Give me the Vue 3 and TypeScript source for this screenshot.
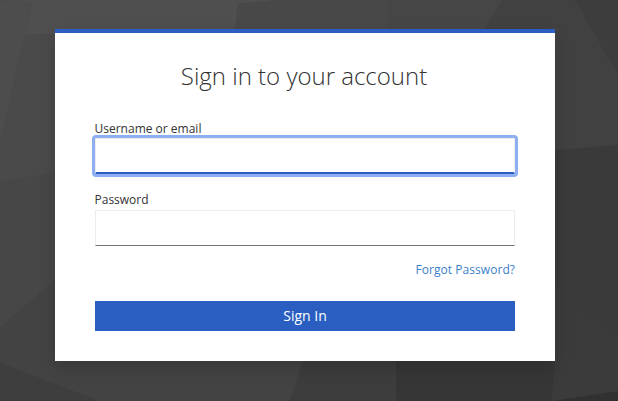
<script setup lang="ts">
const facets: { points: string; fill: string }[] = [
  { points: "0,0 618,0 618,401 0,401", fill: "#424242" },
  { points: "0,0 277,0 238,4 235,34 25,34 32,3", fill: "#4f4f4f" },
  { points: "32,3 25,34 55,34 55,173 0,182 0,143", fill: "#4a4a4a" },
  { points: "0,0 32,3 0,143", fill: "#4d4d4d" },
  { points: "0,182 55,173 55,280 0,328", fill: "#474747" },
  { points: "0,328 55,280 55,383 0,363", fill: "#434343" },
  { points: "0,363 100,401 0,401", fill: "#3e3e3e" },
  { points: "0,363 55,383 55,361 303,361 290,401 100,401", fill: "#434343" },
  { points: "277,0 388,0 388,34 235,34 238,4", fill: "#484848" },
  { points: "388,0 502,0 482,34 388,34", fill: "#464646" },
  { points: "502,0 575,0 618,75 618,145 555,150 555,34 482,34", fill: "#414141" },
  { points: "575,0 618,0 618,75", fill: "#3d3d3d" },
  { points: "555,150 618,145 618,340 555,290", fill: "#3a3a3a" },
  { points: "555,290 618,340 618,391 552,401 555,361", fill: "#3b3b3b" },
  { points: "303,361 396,361 396,401 290,401", fill: "#3d3d3d" },
  { points: "396,361 555,361 552,401 396,401", fill: "#363636" },
  { points: "618,391 618,401 552,401", fill: "#313131" }
];
</script>

<template>
  <main class="page">
    <svg class="backdrop" viewBox="0 0 618 401" aria-hidden="true">
      <polygon v-for="f in facets" :key="f.points" :points="f.points" :fill="f.fill" />
    </svg>
    <section class="card">
      <h1 class="title">Sign in to your account</h1>
      <form class="form" @submit.prevent>
        <div class="field">
          <label class="label" for="username">Username or email</label>
          <input id="username" class="input input-focus" type="text" />
        </div>
        <div class="field">
          <label class="label" for="password">Password</label>
          <input id="password" class="input" type="password" />
        </div>
        <div class="links">
          <a class="forgot" href="#">Forgot Password?</a>
        </div>
        <button class="submit" type="submit">Sign In</button>
      </form>
    </section>
  </main>
</template>

<style>
html, body { margin: 0; background: #3d3d3d; }
</style>

<style scoped>
.page {
  position: relative;
  width: 618px;
  height: 401px;
  overflow: hidden;
  padding: 29px 0 0 55px;
  box-sizing: border-box;
  font-family: "Open Sans", "Noto Sans", sans-serif;
}
.backdrop {
  position: absolute;
  inset: 0;
  width: 618px;
  height: 401px;
  filter: blur(0.6px);
}
.card {
  position: relative;
  box-sizing: border-box;
  width: 500px;
  height: 332px;
  padding: 0 40px;
  background: #fff;
  border-top: 4px solid #2a5fc1;
  box-shadow: 0 8px 16px rgba(0, 0, 0, 0.14);
}
.title {
  margin: 0;
  padding: 26px 2px 0 0;
  height: 33px;
  line-height: 33px;
  font-size: 24px;
  font-weight: 300;
  color: #333;
  text-align: center;
}
.form {
  display: flex;
  flex-direction: column;
  margin-top: 28px;
}
.field {
  display: flex;
  flex-direction: column;
}
.field + .field {
  margin-top: 17px;
}
.field + .field .label {
  margin-bottom: 1px;
}
.label {
  height: 18px;
  line-height: 18px;
  font-size: 12px;
  color: #333;
  margin-left: -0.5px;
}
.input {
  box-sizing: border-box;
  width: 420px;
  height: 36px;
  margin: 0;
  padding: 0 6px;
  background: #fff;
  border: 1px solid #ededed;
  border-bottom-color: #72767b;
  border-radius: 0;
  outline: none;
}
.input-focus {
  border-bottom: 2px solid #2a5fc1;
  outline: 3px solid #8eaef3;
  outline-offset: 0;
  border-radius: 1px;
}
.links {
  display: flex;
  justify-content: flex-end;
  margin-top: 15px;
}
.forgot {
  font-size: 12px;
  line-height: 18px;
  letter-spacing: 0.05px;
  color: #3b80c8;
  text-decoration: none;
}
.submit {
  box-sizing: border-box;
  width: 420px;
  height: 30px;
  margin-top: 22px;
  padding: 0 0 2px;
  border: 0;
  background: #2a5fc1;
  color: #fff;
  font-family: inherit;
  font-size: 14px;
  font-weight: 400;
}
</style>
